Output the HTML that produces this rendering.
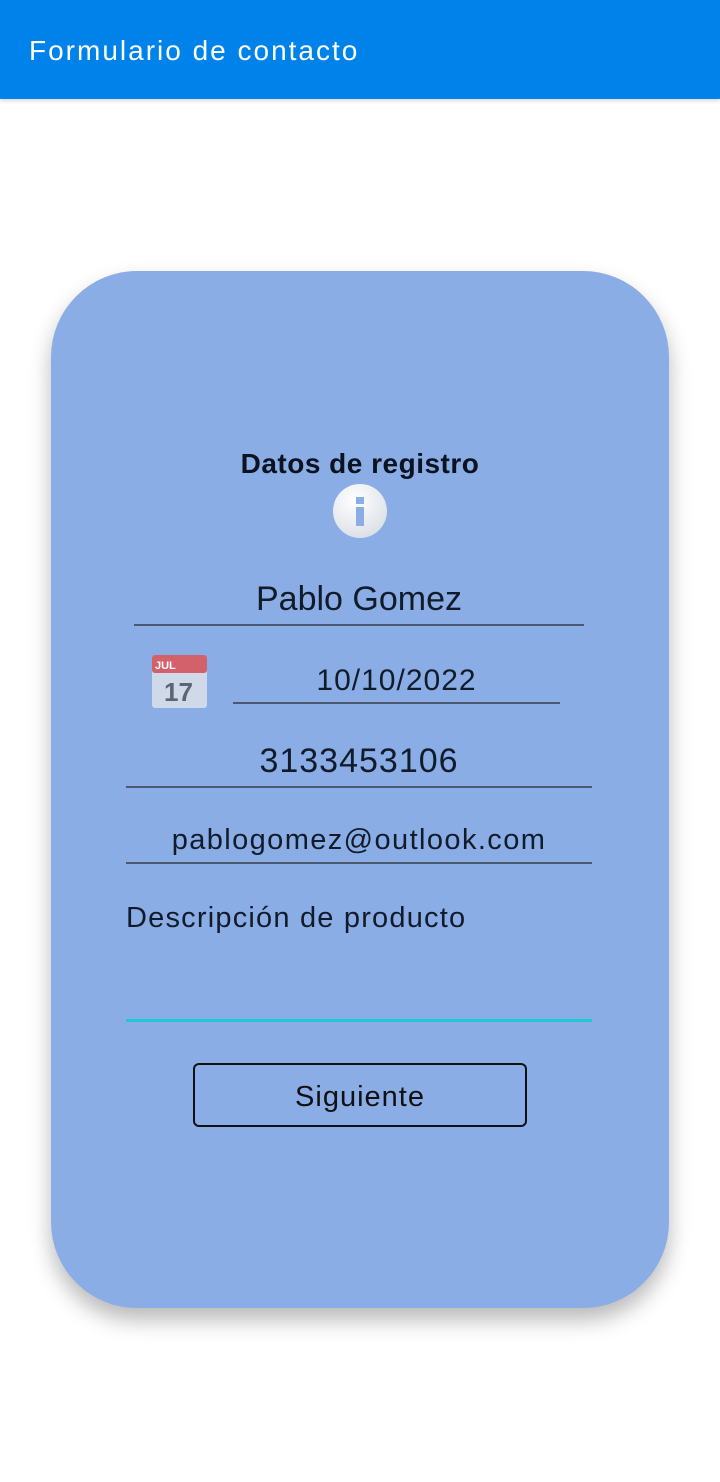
<!DOCTYPE html>
<html><head><meta charset="utf-8"><style>
body{margin:0;width:720px;height:1482px;background:#fff;font-family:"Liberation Sans","DejaVu Sans",sans-serif;position:relative;overflow:hidden}
.bar{position:absolute;left:0;top:0;width:720px;height:99px;background:#0082EB;box-shadow:0 2px 4px rgba(0,0,0,.15)}
.bar span{position:absolute;left:29px;top:35px;color:#fff;font-size:28px;letter-spacing:2px}
.card{position:absolute;left:51px;top:271px;width:618px;height:1037px;background:#8AADE6;border-radius:86px;box-shadow:0 12px 22px rgba(0,0,0,.28)}
.t{position:absolute;color:#111b2a;text-align:center}
.line{position:absolute;height:2px;background:#4a5870}
</style></head><body>
<div class="bar"><span>Formulario de contacto</span></div>
<div class="card"></div>
<div class="t" style="left:0;width:720px;top:448px;font-size:28px;font-weight:bold;color:#0b1220;letter-spacing:0.5px">Datos de registro</div>
<svg style="position:absolute;left:332px;top:483px" width="56" height="56"><defs><radialGradient id="g" cx=".4" cy=".3" r=".8"><stop offset="0" stop-color="#fff"/><stop offset="1" stop-color="#d8dde4"/></radialGradient></defs><circle cx="28" cy="28" r="27" fill="url(#g)"/><rect x="24" y="14" width="8" height="7" fill="#8AADE6"/><rect x="24" y="24" width="8" height="19" fill="#8AADE6"/></svg>
<div class="t" style="left:134px;width:450px;top:580px;font-size:34px">Pablo Gomez</div>
<div class="line" style="left:134px;width:450px;top:624px"></div>
<svg style="position:absolute;left:152px;top:655px" width="55" height="53"><rect x="0" y="0" width="55" height="53" rx="3" fill="#cfd9e8"/><rect x="0" y="0" width="55" height="18" rx="3" fill="#d2616b"/><text x="3" y="14" font-size="11" font-weight="bold" fill="#fff" font-family="Liberation Sans">JUL</text><text x="12" y="46" font-size="26" font-weight="bold" fill="#5a6575" font-family="Liberation Sans">17</text></svg>
<div class="t" style="left:233px;width:327px;top:664px;font-size:30px;letter-spacing:1px">10/10/2022</div>
<div class="line" style="left:233px;width:327px;top:702px"></div>
<div class="t" style="left:126px;width:466px;top:742px;font-size:34px;letter-spacing:1px">3133453106</div>
<div class="line" style="left:126px;width:466px;top:786px"></div>
<div class="t" style="left:126px;width:466px;top:824px;font-size:29px;letter-spacing:1.4px">pablogomez@outlook.com</div>
<div class="line" style="left:126px;width:466px;top:862px"></div>
<div class="t" style="left:126px;top:902px;font-size:29px;text-align:left;letter-spacing:1.2px">Descripción de producto</div>
<div style="position:absolute;left:126px;width:466px;top:1019px;height:3px;background:#1ec8d8"></div>
<div style="position:absolute;left:193px;top:1063px;width:330px;height:60px;border:2px solid #111;border-radius:6px;text-align:center;line-height:64px;font-size:29px;color:#111;letter-spacing:1px">Siguiente</div>
</body></html>
